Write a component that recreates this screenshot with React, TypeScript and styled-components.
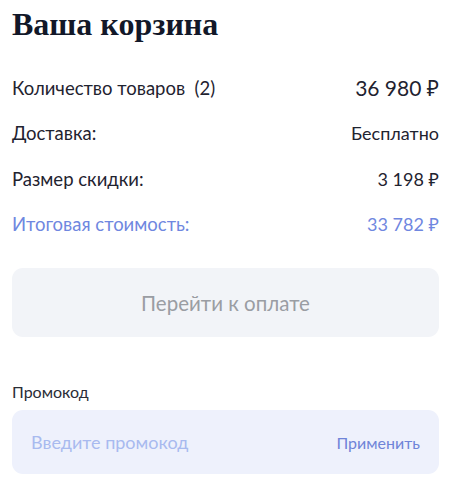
import React from "react";
import styled, { createGlobalStyle } from "styled-components";

const Global = createGlobalStyle`
  html, body { margin: 0; padding: 0; background: #ffffff; }
  body { font-family: "Lato", "Noto Sans", sans-serif; color: #1c1f2a; }
`;

const Wrap = styled.div`
  display: flex;
  flex-direction: column;
  padding: 6px 20px 0 12px;
`;

const Title = styled.h1`
  margin: 0;
  font-family: "Liberation Serif", serif;
  font-weight: 700;
  font-size: 32px;
  line-height: 36px;
  color: #121829;
`;

const Rows = styled.div`
  display: flex;
  flex-direction: column;
  margin-top: 23px;
`;

const Row = styled.div<{ $accent?: boolean }>`
  display: flex;
  justify-content: space-between;
  align-items: center;
  height: 45.5px;
  font-size: 18.5px;
  color: ${(p) => (p.$accent ? "#6f87e0" : "#1f2330")};
`;

const Value = styled.span<{ $big?: boolean }>`
  font-size: ${(p) => (p.$big ? "21px" : "18px")};
`;

const PayButton = styled.button`
  margin-top: 21px;
  height: 69px;
  border: none;
  border-radius: 11px;
  background: #f2f4f8;
  color: #9a9da3;
  font-family: inherit;
  font-size: 20.5px;
  cursor: pointer;
`;

const Label = styled.div`
  margin-top: 45px;
  font-size: 16px;
  color: #2a2d36;
  line-height: 20px;
`;

const PromoBox = styled.div`
  margin-top: 8px;
  height: 64px;
  border-radius: 11px;
  background: #eef1fc;
  display: flex;
  align-items: center;
  justify-content: space-between;
  padding: 0 19px 0 19px;
`;

const PromoInput = styled.input`
  border: none;
  background: transparent;
  outline: none;
  padding: 0;
  font-family: inherit;
  font-size: 18px;
  color: #333;
  flex: 1;
  &::placeholder { color: #a8baef; }
`;

const Apply = styled.button`
  border: none;
  background: transparent;
  font-family: inherit;
  font-size: 16px;
  color: #6f84d8;
  padding: 0;
  cursor: pointer;
`;

export default function App() {
  return (
    <>
      <Global />
      <Wrap>
        <Title>Ваша корзина</Title>
        <Rows>
          <Row>
            <span>Количество товаров&nbsp; (2)</span>
            <Value $big>36 980 ₽</Value>
          </Row>
          <Row>
            <span>Доставка:</span>
            <Value>Бесплатно</Value>
          </Row>
          <Row>
            <span>Размер скидки:</span>
            <Value>3 198 ₽</Value>
          </Row>
          <Row $accent>
            <span>Итоговая стоимость:</span>
            <Value>33 782 ₽</Value>
          </Row>
        </Rows>
        <PayButton>Перейти к оплате</PayButton>
        <Label>Промокод</Label>
        <PromoBox>
          <PromoInput placeholder="Введите промокод" />
          <Apply>Применить</Apply>
        </PromoBox>
      </Wrap>
    </>
  );
}
